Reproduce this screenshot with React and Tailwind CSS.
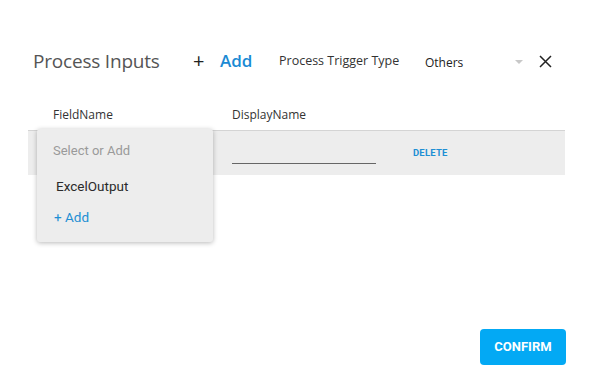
export default function App() {
  const seg = { fontFamily: '"Open Sans", "Noto Sans", sans-serif' };
  const rob = { fontFamily: 'Roboto, "Noto Sans", sans-serif' };
  return (
    <div className="relative w-[593px] h-[384px] bg-white overflow-hidden">
      <div className="flex items-center h-[24px] mt-[49px] pl-[33px]">
        <div className="text-[19px] text-[#555] tracking-[-0.2px] w-[160px]" style={seg}>Process Inputs</div>
        <div className="text-[20px] text-[#222] ml-[0px] w-[27px] leading-none" style={seg}>+</div>
        <div className="text-[17px] font-semibold text-[#1a8ad4] w-[59px]" style={seg}>Add</div>
        <div className="text-[12.5px] text-[#333] w-[146px]" style={seg}>Process Trigger Type</div>
        <div className="text-[12px] text-[#222] w-[90px] mt-[3px]" style={seg}>Others</div>
        <div className="w-0 h-0 border-l-[4px] border-r-[4px] border-t-[4px] border-l-transparent border-r-transparent border-t-[#c8c8c8] mt-[2px]"></div>
        <svg className="ml-[16px]" width="13" height="13" viewBox="0 0 13 13">
          <path d="M1 1 L12 12 M12 1 L1 12" stroke="#222" strokeWidth="1.5" />
        </svg>
      </div>
      <div className="flex mt-[33px] pl-[53px] text-[12px] text-[#333]" style={seg}>
        <div className="w-[179px]">FieldName</div>
        <div>DisplayName</div>
      </div>
      <div className="relative mx-[28px] mt-[6px] h-[45px] bg-[#ededed] border-t border-[#d4d4d4] flex items-center">
        <div className="ml-[204px] w-[144px] h-[1px] bg-[#666] mt-[20px]"></div>
        <div className="ml-[37px] text-[9.5px] font-bold tracking-[0.2px] text-[#1e8fd4]" style={rob}>DELETE</div>
        <div className="absolute left-[9px] top-[-2px] w-[176px] h-[113px] bg-[#ededed] rounded-[3px] shadow-[0_1px_5px_rgba(0,0,0,0.28)] flex flex-col" style={rob}>
          <div className="mt-[12px] ml-[16px] text-[13px] text-[#9a9a9a]">Select or Add</div>
          <div className="mt-[15px] ml-[19px] text-[13.5px] font-normal text-[#2a2a2a]">ExcelOutput</div>
          <div className="mt-[11px] ml-[17px] text-[13.5px] text-[#1e8fd4]">+ Add</div>
        </div>
      </div>
      <div className="absolute left-[480px] top-[329px] w-[86px] h-[36px] bg-[#03a9f4] rounded-[4px] flex items-center justify-center text-white text-[13px] font-bold" style={rob}>
        CONFIRM
      </div>
    </div>
  );
}
